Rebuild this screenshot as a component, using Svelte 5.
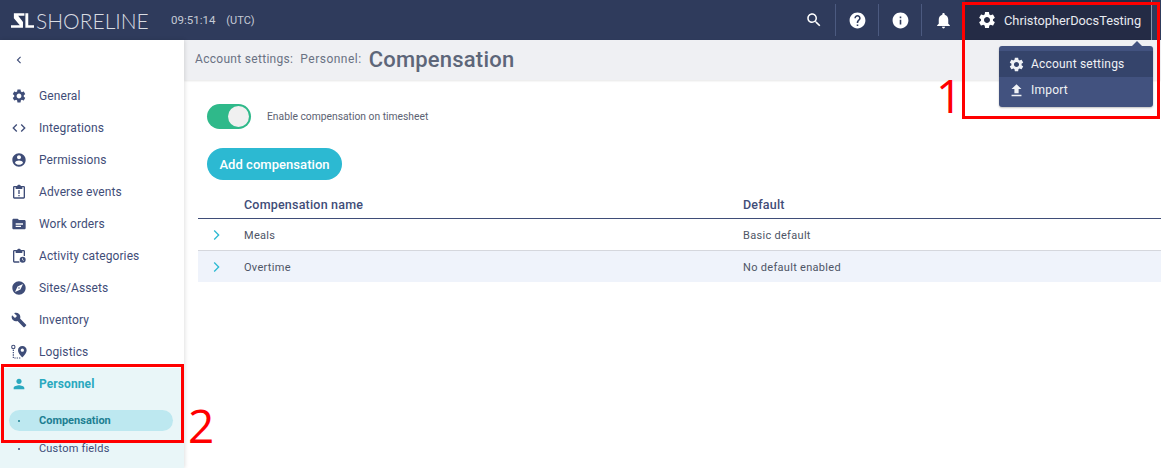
<script>
  const gear = 'M19.14 12.94c.04-.3.06-.61.06-.94 0-.32-.02-.64-.07-.94l2.03-1.58c.18-.14.23-.41.12-.61l-1.92-3.32c-.12-.22-.37-.29-.59-.22l-2.39.96c-.5-.38-1.03-.7-1.62-.94l-.36-2.54c-.04-.24-.24-.41-.48-.41h-3.84c-.24 0-.43.17-.47.41l-.36 2.54c-.59.24-1.13.57-1.62.94l-2.39-.96c-.22-.08-.47 0-.59.22L2.74 8.87c-.12.21-.08.47.12.61l2.03 1.58c-.05.3-.09.63-.09.94s.02.64.07.94l-2.03 1.58c-.18.14-.23.41-.12.61l1.92 3.32c.12.22.37.29.59.22l2.39-.96c.5.38 1.03.7 1.62.94l.36 2.54c.05.24.24.41.48.41h3.84c.24 0 .44-.17.47-.41l.36-2.54c.59-.24 1.13-.56 1.62-.94l2.39.96c.22.08.47 0 .59-.22l1.92-3.32c.12-.22.07-.47-.12-.61l-2.01-1.58zM12 15.6c-1.98 0-3.6-1.62-3.6-3.6s1.62-3.6 3.6-3.6 3.6 1.62 3.6 3.6-1.62 3.6-3.6 3.6z';
  const search = 'M15.5 14h-.79l-.28-.27C15.41 12.59 16 11.11 16 9.5 16 5.91 13.09 3 9.5 3S3 5.91 3 9.5 5.91 16 9.5 16c1.61 0 3.09-.59 4.23-1.57l.27.28v.79l5 4.99L20.49 19l-4.99-5zm-6 0C7.01 14 5 11.99 5 9.5S7.01 5 9.5 5 14 7.01 14 9.5 11.99 14 9.5 14z';
  const help = 'M12 2C6.48 2 2 6.48 2 12s4.48 10 10 10 10-4.48 10-10S17.52 2 12 2zm1 17h-2v-2h2v2zm2.07-7.75l-.9.92C13.45 12.9 13 13.5 13 15h-2v-.5c0-1.1.45-2.1 1.17-2.83l1.24-1.26c.37-.36.59-.86.59-1.41 0-1.1-.9-2-2-2s-2 .9-2 2H8c0-2.21 1.79-4 4-4s4 1.79 4 4c0 .88-.36 1.68-.93 2.25z';
  const info = 'M12 2C6.48 2 2 6.48 2 12s4.48 10 10 10 10-4.48 10-10S17.52 2 12 2zm1 15h-2v-6h2v6zm0-8h-2V7h2v2z';
  const bell = 'M12 22c1.1 0 2-.9 2-2h-4c0 1.1.89 2 2 2zm6-6v-5c0-3.07-1.64-5.64-4.5-6.32V4c0-.83-.67-1.5-1.5-1.5s-1.5.67-1.5 1.5v.68C7.63 5.36 6 7.92 6 11v5l-2 2v1h16v-1l-2-2z';
  const upload = 'M5 20h14v-2H5v2zm0-10h4v6h6v-6h4l-7-7-7 7z';
  const person = 'M12 12c2.21 0 4-1.79 4-4s-1.79-4-4-4-4 1.79-4 4 1.79 4 4 4zm0 2c-2.67 0-8 1.34-8 4v2h16v-2c0-2.66-5.33-4-8-4z';

  const navItems = [
    { label: 'General', icon: gear },
    { label: 'Integrations', icon: 'M9.4 16.6L4.8 12l4.6-4.6L8 6l-6 6 6 6 1.4-1.4zm5.2 0l4.6-4.6-4.6-4.6L16 6l6 6-6 6-1.4-1.4z' },
    { label: 'Permissions', icon: 'M12 2C6.48 2 2 6.48 2 12s4.48 10 10 10 10-4.48 10-10S17.52 2 12 2zm0 3c1.66 0 3 1.34 3 3s-1.34 3-3 3-3-1.34-3-3 1.34-3 3-3zm0 14.2c-2.5 0-4.71-1.28-6-3.22.03-1.99 4-3.08 6-3.08 1.99 0 5.97 1.09 6 3.08-1.29 1.94-3.5 3.22-6 3.22z' },
    { label: 'Adverse events', icon: 'M19 3h-4.2C14.4 1.8 13.3 1 12 1s-2.4.8-2.8 2H5c-1.1 0-2 .9-2 2v15c0 1.1.9 2 2 2h14c1.1 0 2-.9 2-2V5c0-1.1-.9-2-2-2zm0 17H5V5h2v2.5h10V5h2v15zM11 9h2v6h-2V9zm0 7.5h2v2h-2v-2z' },
    { label: 'Work orders', icon: 'M20 6h-8l-2-2H4c-1.1 0-2 .9-2 2v12c0 1.1.9 2 2 2h16c1.1 0 2-.9 2-2V8c0-1.1-.9-2-2-2zM7 11h11v2H7v-2zm0 3.5h8v2H7v-2z' },
    { label: 'Activity categories', icon: 'M19 3h-4.2C14.4 1.8 13.3 1 12 1s-2.4.8-2.8 2H5c-1.1 0-2 .9-2 2v15c0 1.1.9 2 2 2h7.5v-2H5V5h2v2.5h10V5h2v7h2V5c0-1.1-.9-2-2-2zM17.5 13a4.5 4.5 0 1 0 0 9 4.5 4.5 0 0 0 0-9zm1.5 6.2l-2-1.2v-2.7h1v2.2l1.5.9-.5.8z' },
    { label: 'Sites/Assets', icon: 'M12 10.9c-.61 0-1.1.49-1.1 1.1s.49 1.1 1.1 1.1c.61 0 1.1-.49 1.1-1.1s-.49-1.1-1.1-1.1zM12 2C6.48 2 2 6.48 2 12s4.48 10 10 10 10-4.48 10-10S17.52 2 12 2zm2.19 12.19L6 18l3.81-8.19L18 6l-3.81 8.19z' },
    { label: 'Inventory', icon: 'M22.7 19l-9.1-9.1c.9-2.3.4-5-1.5-6.9-2-2-5-2.4-7.4-1.3L9 6 6 9 1.6 4.7C.4 7.1.9 10.1 2.9 12.1c1.9 1.9 4.6 2.4 6.9 1.5l9.1 9.1c.4.4 1 .4 1.4 0l2.3-2.3c.5-.4.5-1.1.1-1.4z' }
  ];

  const rows = [
    { name: 'Meals', value: 'Basic default' },
    { name: 'Overtime', value: 'No default enabled' }
  ];
</script>

<div class="page">
  <header class="topbar">
    <div class="brand">
      <svg class="mark" viewBox="0 0 24 15" aria-hidden="true">
        <path d="M3 0h11v2.6H7.5L12.5 9v6H0v-2.6h9.2L3 5.2z" />
        <path d="M15 0h3v12.4h6V15h-9z" />
      </svg>
      <span class="wordmark">SHORELINE</span>
    </div>
    <span class="clock">09:51:14</span>
    <span class="zone">(UTC)</span>
    <div class="tools">
      <span class="tool sep"><svg class="small" viewBox="0 0 24 24"><path d={search} /></svg></span>
      <span class="tool sep"><svg viewBox="0 0 24 24"><path d={help} /></svg></span>
      <span class="tool sep"><svg viewBox="0 0 24 24"><path d={info} /></svg></span>
      <span class="tool"><svg viewBox="0 0 24 24"><path d={bell} /></svg></span>
    </div>
    <div class="user">
      <svg viewBox="0 0 24 24"><path d={gear} /></svg>
      <span>ChristopherDocsTesting</span>
    </div>
  </header>

  <div class="body">
    <aside class="sidebar">
      <div class="collapse">
        <svg viewBox="0 0 24 24"><path d="M15.4 7.4L14 6l-6 6 6 6 1.4-1.4L10.8 12z" /></svg>
      </div>
      <nav>
        {#each navItems as item}
          <div class="nav-item">
            <svg viewBox="0 0 24 24"><path d={item.icon} /></svg>
            <span>{item.label}</span>
          </div>
        {/each}
        <div class="nav-item">
          <svg viewBox="0 0 24 24">
            <circle cx="3.5" cy="4.5" r="2.5" fill="none" stroke="currentColor" stroke-width="1.6" />
            <path d="M3.5 8.5V21h12" fill="none" stroke="currentColor" stroke-width="1.8" stroke-dasharray="2 1.5" />
            <path d="M17 3c-3.6 0-6.500 2.700-6.500 6.300C10.500 14 17 20 17 20s6.500-6 6.500-10.700C23.500 5.700 20.600 3 17 3zm0 8.800a2.500 2.500 0 1 1 0-5 2.500 2.500 0 0 1 0 5z" />
          </svg>
          <span>Logistics</span>
        </div>
      </nav>
      <div class="section">
        <div class="nav-item active">
          <svg viewBox="0 0 24 24"><path d={person} /></svg>
          <span>Personnel</span>
        </div>
        <div class="sub current"><i></i><span>Compensation</span></div>
        <div class="sub"><i></i><span>Custom fields</span></div>
      </div>
    </aside>

    <main class="main">
      <div class="crumbs">
        <span class="crumb">Account settings:</span>
        <span class="crumb">Personnel:</span>
        <h1>Compensation</h1>
      </div>
      <div class="content">
        <div class="toggle-row">
          <span class="toggle"><span class="knob"></span></span>
          <span class="toggle-label">Enable compensation on timesheet</span>
        </div>
        <button class="add">Add compensation</button>
        <div class="table">
          <div class="row head">
            <span class="cell-name">Compensation name</span>
            <span>Default</span>
          </div>
          {#each rows as row, i}
            <div class="row" class:alt={i % 2 === 1}>
              <svg class="chev" viewBox="0 0 24 24"><path d="M8.6 6L10 4.6 17.4 12 10 19.4 8.6 18l6-6z" /></svg>
              <span class="cell-name">{row.name}</span>
              <span>{row.value}</span>
            </div>
          {/each}
        </div>
      </div>
    </main>
  </div>

  <div class="menu">
    <div class="menu-item hover">
      <svg viewBox="0 0 24 24"><path d={gear} /></svg>
      <span>Account settings</span>
    </div>
    <div class="menu-item">
      <svg viewBox="0 0 24 24"><path d={upload} /></svg>
      <span>Import</span>
    </div>
  </div>

  <div class="mark-box one"></div>
  <div class="mark-box two"></div>
  <span class="num n1">1</span>
  <span class="num n2">2</span>
</div>

<style>
  :global(body) {
    margin: 0;
    background: #fff;
  }

  .page {
    position: relative;
    width: 1161px;
    height: 468px;
    overflow: hidden;
    font-family: "Roboto", "Noto Sans", sans-serif;
    color: #3f4d78;
  }

  svg {
    fill: currentColor;
    display: block;
    flex: none;
  }

  .topbar {
    display: flex;
    align-items: center;
    height: 40px;
    background: #2f3b5c;
    color: #fff;
    box-sizing: border-box;
    padding-left: 11px;
  }

  .brand {
    display: flex;
    align-items: center;
    width: 160px;
  }

  .mark {
    width: 23px;
    height: 15px;
  }

  .wordmark {
    font-family: "Lato", sans-serif;
    font-weight: 300;
    font-size: 21px;
    color: #d9dce2;
    margin-left: 2px;
  }

  .clock {
    font-size: 11.5px;
    color: #c5cad5;
  }

  .zone {
    font-size: 11px;
    color: #c5cad5;
    margin-left: 11px;
  }

  .tools {
    display: flex;
    align-items: center;
    margin-left: auto;
  }

  .tool {
    display: flex;
    justify-content: center;
    align-items: center;
    width: 43px;
    height: 32px;
    box-sizing: border-box;
  }

  .tool svg {
    width: 19px;
    height: 19px;
  }

  .tool svg.small {
    width: 18px;
    height: 18px;
  }

  .tool.sep {
    border-right: 1px solid #4c5a80;
  }

  .user {
    display: flex;
    align-items: center;
    gap: 7px;
    width: 187px;
    height: 40px;
    margin-right: 9px;
    padding-left: 12px;
    box-sizing: border-box;
    background: #242b45;
    border-right: 1px solid #8a93a8;
    font-size: 12.8px;
    color: #e8eaf0;
  }

  .user svg {
    width: 20px;
    height: 20px;
    color: #fff;
  }

  .body {
    display: flex;
    height: 428px;
  }

  .sidebar {
    flex: none;
    width: 184px;
    background: #fff;
    box-shadow: 1px 0 4px rgba(0, 0, 0, 0.12);
    position: relative;
    font-size: 12px;
    letter-spacing: 0.1px;
  }

  .collapse {
    height: 40px;
    padding-left: 12px;
    display: flex;
    align-items: center;
  }

  .collapse svg {
    width: 14px;
    height: 14px;
  }

  .nav-item {
    display: flex;
    align-items: center;
    height: 32px;
    padding-left: 11px;
    gap: 12px;
  }

  .nav-item svg {
    width: 16px;
    height: 16px;
  }

  .section {
    background: #e9f6f8;
    height: 100px;
  }

  .active {
    color: #2aa9bf;
    font-weight: 700;
  }

  .sub {
    display: flex;
    align-items: center;
    height: 21px;
    margin: 0 11px 0 9px;
    padding-left: 9px;
    gap: 19px;
    font-size: 11px;
    letter-spacing: 0.2px;
    border-radius: 11px;
  }

  .sub i {
    width: 2px;
    height: 2px;
    border-radius: 50%;
    background: currentColor;
  }

  .sub.current {
    margin-top: 10px;
    margin-bottom: 7px;
    background: #bde8f0;
    color: #1d7f92;
    font-weight: 700;
    letter-spacing: 0;
  }

  .main {
    flex: 1;
    min-width: 0;
  }

  .crumbs {
    display: flex;
    align-items: center;
    gap: 7px;
    height: 38px;
    padding: 0 0 2px 11px;
    background: #eff0f3;
    box-shadow: 0 1px 2px rgba(0, 0, 0, 0.1);
  }

  .crumb {
    font-size: 12px;
    letter-spacing: 0.3px;
    color: #6a7283;
  }

  .crumb + .crumb {
    letter-spacing: 0.5px;
  }

  h1 {
    margin: 0;
    font-size: 22px;
    font-weight: 500;
    letter-spacing: 0.2px;
    color: #5d6679;
  }

  .content {
    padding: 24px 0 0 14px;
  }

  .toggle-row {
    display: flex;
    align-items: center;
    margin-left: 9px;
    gap: 16px;
  }

  .toggle {
    display: flex;
    justify-content: flex-end;
    align-items: center;
    width: 44px;
    height: 25px;
    padding-right: 2px;
    box-sizing: border-box;
    border-radius: 13px;
    background: #2fb98a;
  }

  .knob {
    width: 21px;
    height: 21px;
    border-radius: 50%;
    background: #f0f0f0;
  }

  .toggle-label {
    font-size: 10.3px;
    color: #5c6272;
  }

  .add {
    display: block;
    height: 32px;
    width: 135px;
    margin: 19px 0 0 9px;
    padding: 0;
    border: 0;
    border-radius: 16px;
    background: #2cb9d2;
    color: #fff;
    font: inherit;
    font-size: 13px;
    font-weight: 500;
    letter-spacing: 0.05px;
  }

  .table {
    margin-top: 12px;
    font-size: 11px;
    letter-spacing: 0.3px;
    color: #4e5566;
  }

  .row {
    display: flex;
    align-items: center;
    height: 30px;
    padding-top: 1px;
    border-bottom: 1px solid #d5d7dd;
    padding-left: 46px;
    position: relative;
  }

  .row:last-child {
    border-bottom: 0;
  }

  .row.head {
    padding-top: 0;
    padding-bottom: 2px;
    height: 24px;
    border-bottom: 1px solid #3f4d78;
    color: #3f4d78;
    font-size: 12.5px;
    font-weight: 500;
    letter-spacing: 0.2px;
  }

  .row.alt {
    background: #eff3fb;
  }

  .cell-name {
    width: 499px;
  }

  .chev {
    width: 16px;
    height: 16px;
    color: #2cb9d2;
    position: absolute;
    left: 10px;
  }

  .menu {
    position: absolute;
    left: 999px;
    top: 46px;
    width: 154px;
    padding-top: 5px;
    background: #42527f;
    border-radius: 3px;
    color: #f0f2f6;
    font-size: 12px;
    letter-spacing: 0.2px;
    box-shadow: 0 1px 2px rgba(0, 0, 0, 0.25);
  }

  .menu::before {
    content: '';
    position: absolute;
    right: 11px;
    top: -5px;
    border: 5px solid transparent;
    border-top: 0;
    border-bottom-color: #42527f;
  }

  .menu-item {
    display: flex;
    align-items: center;
    height: 26px;
    padding-left: 9px;
    gap: 6px;
  }

  .menu-item:last-child {
    padding-bottom: 4px;
    border-radius: 0 0 3px 3px;
  }

  .menu-item svg {
    width: 17px;
    height: 17px;
  }

  .menu-item.hover {
    background: #35446b;
  }

  .mark-box {
    position: absolute;
    border: 3px solid #f00;
    box-sizing: border-box;
  }

  .mark-box.one {
    left: 962px;
    top: 2px;
    width: 198px;
    height: 117px;
  }

  .mark-box.two {
    left: 1px;
    top: 364px;
    width: 183px;
    height: 79px;
  }

  .num {
    position: absolute;
    color: #f00;
    font-family: "Open Sans", sans-serif;
    font-size: 46px;
    line-height: 46px;
  }

  .n1 {
    left: 936px;
    top: 72px;
  }

  .n2 {
    left: 188px;
    top: 402px;
  }
</style>
